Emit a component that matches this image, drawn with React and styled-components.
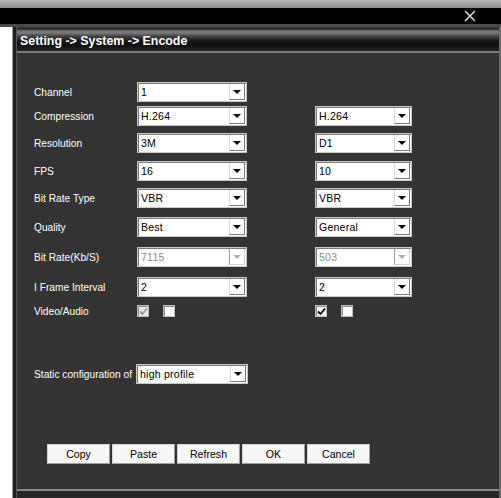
import styled, { createGlobalStyle } from 'styled-components'

const GlobalStyle = createGlobalStyle`
  html, body {
    margin: 0;
    padding: 0;
    background: #ffffff;
  }
  body {
    font-family: "Liberation Sans", Arial, sans-serif;
    font-size: 11px;
  }
`

const Window = styled.div`
  width: 501px;
  height: 498px;
  display: flex;
  flex-direction: column;
  overflow: hidden;
  background: #2c2c2c;
`

const TopStrip = styled.div`
  height: 8px;
  background: linear-gradient(#b8b8b8, #8e8e8e);
`

const BlackBar = styled.div`
  height: 16px;
  background: #000;
  display: flex;
  justify-content: flex-end;
  align-items: center;
  padding-right: 25px;
  border-bottom: 3px solid #4a4a4a;
`

const CloseIcon = styled.svg`
  width: 12px;
  height: 12px;
  display: block;
`

const Body = styled.div`
  flex: 1;
  display: flex;
`

const SideStrip = styled.div`
  width: 12px;
  background: #ffffff;
  border-right: 1px solid #9a9a9a;
`

const SideGap = styled.div`
  width: 3px;
  background: #1e1e1e;
  border-right: 1px solid #555;
`

const Panel = styled.div`
  flex: 1;
  display: flex;
  flex-direction: column;
  background: #333333;
  border-right: 2px solid #6a6a6a;
`

const TitleBar = styled.div`
  margin-top: 3px;
  height: 21px;
  display: flex;
  align-items: center;
  padding-left: 3px;
  color: #fff;
  font-weight: bold;
  font-size: 12.4px;
  background: linear-gradient(#6a6a6a 0px, #7a7a7a 3px, #454545 6px, #161616 11px, #0e0e0e 15px, #262626 21px);
  border-bottom: 2px solid #7c7c7c;
`

const Content = styled.div`
  flex: 1;
  display: flex;
  flex-direction: column;
  padding: 29px 0 0 17px;
`

const Row = styled.div`
  display: flex;
  align-items: center;
  height: 20px;
  margin-top: ${(p) => p.$gap ?? 0}px;
`

const Label = styled.div`
  width: ${(p) => p.$width ?? 103}px;
  color: #fff;
  font-size: 10.2px;
  white-space: nowrap;
`

const Cell = styled.div`
  width: ${(p) => p.$width}px;
  display: flex;
  align-items: center;
`

const SelectBox = styled.div`
  width: ${(p) => p.$width}px;
  height: 20px;
  box-sizing: border-box;
  display: flex;
  background: #fff;
  border: 1px solid #c8c8c8;
  box-shadow: inset 1px 1px 0 #7a7a7a;
`

const SelectValue = styled.div`
  flex: 1;
  padding-left: 3px;
  display: flex;
  align-items: center;
  font-size: 10.6px;
  color: ${(p) => (p.$disabled ? '#8c8c8c' : '#000')};
  letter-spacing: 0.2px;
`

const SelectButton = styled.div`
  width: 16px;
  margin: 1px 1px 1px 0;
  box-sizing: border-box;
  background: #fff;
  border-left: 1px solid ${(p) => (p.$disabled ? '#9a9a9a' : '#d8d8d8')};
  border-bottom: 1px solid ${(p) => (p.$disabled ? '#d0d0d0' : '#7a7a7a')};
  border-right: 1px solid ${(p) => (p.$disabled ? '#d0d0d0' : '#7a7a7a')};
  display: flex;
  align-items: center;
  justify-content: center;
  &::after {
    content: '';
    border-left: 4px solid transparent;
    border-right: 4px solid transparent;
    border-top: 4px solid ${(p) => (p.$disabled ? '#b0b0b0' : '#000')};
    margin-top: 1px;
  }
`

const CheckBox = styled.div`
  width: 12px;
  height: 12px;
  box-sizing: border-box;
  background: ${(p) => (p.$disabled ? '#e6e6e6' : '#fff')};
  border: 1px solid #c0c0c0;
  box-shadow: inset 1px 1px 0 #8a8a8a;
  margin-right: 14px;
  display: flex;
  align-items: center;
  justify-content: center;
`

const CheckMark = styled.svg`
  width: 9px;
  height: 9px;
  display: block;
`

const ButtonBar = styled.div`
  margin-top: 60px;
  display: flex;
  gap: 2px;
  padding-left: 13px;
`

const Button = styled.div`
  width: 63px;
  height: 20px;
  box-sizing: border-box;
  background: #f7f7f7;
  border: 1px solid #d4d4d4;
  border-right-color: #a0a0a0;
  border-bottom-color: #a0a0a0;
  color: #000;
  font-size: 10.6px;
  display: flex;
  align-items: center;
  justify-content: center;
`

const BottomEdge = styled.div`
  height: 7px;
  background: #262626;
  border-top: 2px solid #8a8a8a;
`

function Select({ value, width, disabled }) {
  return (
    <SelectBox $width={width}>
      <SelectValue $disabled={disabled}>{value}</SelectValue>
      <SelectButton $disabled={disabled} />
    </SelectBox>
  )
}

function Check({ checked, disabled }) {
  return (
    <CheckBox $disabled={disabled}>
      {checked && (
        <CheckMark viewBox="0 0 9 9">
          <path
            d="M1 4.5 L3.5 7 L8 1.5"
            fill="none"
            stroke={disabled ? '#9a9a9a' : '#000'}
            strokeWidth="1.8"
          />
        </CheckMark>
      )}
    </CheckBox>
  )
}

const rows = [
  { label: 'Channel', left: '1', gap: 0 },
  { label: 'Compression', left: 'H.264', right: 'H.264', gap: 4 },
  { label: 'Resolution', left: '3M', right: 'D1', gap: 7 },
  { label: 'FPS', left: '16', right: '10', gap: 8 },
  { label: 'Bit Rate Type', left: 'VBR', right: 'VBR', gap: 7 },
  { label: 'Quality', left: 'Best', right: 'General', gap: 9 },
  { label: 'Bit Rate(Kb/S)', left: '7115', right: '503', gap: 10, disabled: true },
  { label: 'I Frame Interval', left: '2', right: '2', gap: 10 },
]

export default function App() {
  return (
    <>
      <GlobalStyle />
      <Window>
        <TopStrip />
        <BlackBar>
          <CloseIcon viewBox="0 0 12 12">
            <path d="M1 1 L11 11 M11 1 L1 11" stroke="#d8d8d8" strokeWidth="1.6" />
          </CloseIcon>
        </BlackBar>
        <Body>
          <SideStrip />
          <SideGap />
          <Panel>
            <TitleBar>Setting -&gt; System -&gt; Encode</TitleBar>
            <Content>
              {rows.map((r) => (
                <Row key={r.label} $gap={r.gap}>
                  <Label>{r.label}</Label>
                  <Cell $width={178}>
                    <Select value={r.left} width={110} disabled={r.disabled} />
                  </Cell>
                  {r.right && (
                    <Cell $width={97}>
                      <Select value={r.right} width={97} disabled={r.disabled} />
                    </Cell>
                  )}
                </Row>
              ))}
              <Row $gap={4}>
                <Label>Video/Audio</Label>
                <Cell $width={178}>
                  <Check checked disabled />
                  <Check />
                </Cell>
                <Cell $width={97}>
                  <Check checked />
                  <Check />
                </Cell>
              </Row>
              <Row $gap={43}>
                <Label $width={102}>Static configuration of</Label>
                <Select value="high profile" width={112} />
              </Row>
              <ButtonBar>
                <Button>Copy</Button>
                <Button>Paste</Button>
                <Button>Refresh</Button>
                <Button>OK</Button>
                <Button>Cancel</Button>
              </ButtonBar>
            </Content>
            <BottomEdge />
          </Panel>
        </Body>
      </Window>
    </>
  )
}
